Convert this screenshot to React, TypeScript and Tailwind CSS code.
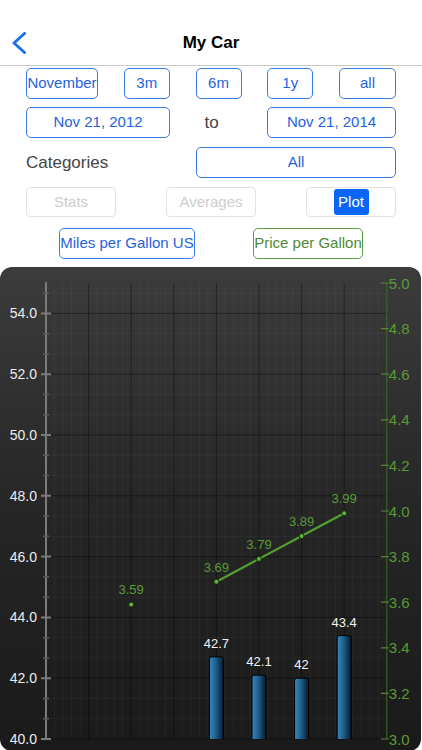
import React from "react";

const blueBtn =
  "h-full flex items-center justify-center rounded-[5px] border border-[#3a7ae6] text-[#1f63dc] text-[15px] whitespace-nowrap";
const greyBtn =
  "h-full w-[90px] flex items-center justify-center rounded-[4px] border border-[#e2e2e2] text-[#cdcdcd] text-[15px]";

const TOP = 16;
const BOTTOM = 472;
const X0 = 46;
const STEP = 42.6;

const yLeft = (v: number) => BOTTOM - (v - 40) * ((BOTTOM - TOP) / 15);
const yRight = (v: number) => BOTTOM - (v - 3) * ((BOTTOM - TOP) / 2);
const xAt = (i: number) => X0 + i * STEP;

const prices = [
  { i: 2, v: 3.59 },
  { i: 4, v: 3.69 },
  { i: 5, v: 3.79 },
  { i: 6, v: 3.89 },
  { i: 7, v: 3.99 },
];
const bars = [
  { i: 4, v: 42.7 },
  { i: 5, v: 42.1 },
  { i: 6, v: 42 },
  { i: 7, v: 43.4 },
];

function Chart() {
  const vMinor = Array.from({ length: 39 }, (_, k) => k + 1);
  const hLines = Array.from({ length: 23 }, (_, k) => k);
  const leftLabels = [54, 52, 50, 48, 46, 44, 42, 40];
  const rightLabels = [5.0, 4.8, 4.6, 4.4, 4.2, 4.0, 3.8, 3.6, 3.4, 3.2, 3.0];
  const line = prices.slice(1).map((p) => `${xAt(p.i)},${yRight(p.v)}`).join(" ");

  return (
    <svg width="422" height="484" viewBox="0 0 422 484" className="block">
      <defs>
        <linearGradient id="bar" x1="0" x2="1" y1="0" y2="0">
          <stop offset="0" stopColor="#3489c2" />
          <stop offset="0.45" stopColor="#1f5f8c" />
          <stop offset="1" stopColor="#07192a" />
        </linearGradient>
      </defs>

      {vMinor.map((k) => (
        <line
          key={"v" + k}
          x1={X0 + k * (STEP / 5)}
          x2={X0 + k * (STEP / 5)}
          y1={TOP}
          y2={BOTTOM}
          stroke={k % 5 === 0 ? "rgba(0,0,0,0.38)" : "rgba(255,255,255,0.04)"}
          strokeWidth="1"
        />
      ))}
      {hLines.map((k) => {
        const y = yLeft(40 + (k * 2) / 3);
        return (
          <line
            key={"h" + k}
            x1={X0}
            x2={xAt(8)}
            y1={y}
            y2={y}
            stroke={k % 3 === 0 ? "rgba(0,0,0,0.38)" : "rgba(255,255,255,0.04)"}
            strokeWidth="1"
          />
        );
      })}

      {/* left axis */}
      <line x1={X0} x2={X0} y1={TOP - 1} y2={BOTTOM + 1} stroke="#7b7b7b" strokeWidth="2" />
      {hLines.map((k) =>
        k % 3 === 0 ? null : (
          <line
            key={"mt" + k}
            x1={X0 - 3}
            x2={X0 + 3}
            y1={yLeft(40 + (k * 2) / 3)}
            y2={yLeft(40 + (k * 2) / 3)}
            stroke="#5a5a5a"
            strokeWidth="1.5"
          />
        )
      )}
      {leftLabels.map((v) => (
        <g key={"l" + v}>
          <line x1={X0 - 5} x2={X0 + 5} y1={yLeft(v)} y2={yLeft(v)} stroke="#7b7b7b" strokeWidth="2" />
          <text
            x={37}
            y={yLeft(v) + 5}
            textAnchor="end"
            fill="#ececec"
            fontSize="14"
            fontFamily="'Liberation Sans', Arial, sans-serif"
          >
            {v.toFixed(1)}
          </text>
        </g>
      ))}

      {/* right axis */}
      <line x1={xAt(8)} x2={xAt(8)} y1={TOP} y2={BOTTOM} stroke="#3f6c2a" strokeWidth="1" />
      {rightLabels.map((v) => (
        <g key={"r" + v}>
          <line x1={xAt(8) - 6} x2={xAt(8) + 2} y1={yRight(v)} y2={yRight(v)} stroke="#4f8a33" strokeWidth="1.2" />
          <text
            x={xAt(8) + 2}
            y={yRight(v) + 5.5}
            fill="#5a9a38"
            fontSize="15"
            fontFamily="'Liberation Sans', Arial, sans-serif"
          >
            {v.toFixed(1)}
          </text>
        </g>
      ))}

      {/* bars */}
      {bars.map((b) => (
        <g key={"b" + b.i}>
          <path
            d={`M${xAt(b.i) - 7},${BOTTOM} V${yLeft(b.v) + 2} Q${xAt(b.i) - 7},${yLeft(b.v)} ${xAt(b.i) - 5},${yLeft(b.v)} H${xAt(b.i) + 5} Q${xAt(b.i) + 7},${yLeft(b.v)} ${xAt(b.i) + 7},${yLeft(b.v) + 2} V${BOTTOM}`}
            fill="url(#bar)"
            stroke="#000"
            strokeWidth="1"
          />
          <text
            x={xAt(b.i)}
            y={yLeft(b.v) - 9}
            textAnchor="middle"
            fill="#f2f2f2"
            fontSize="13"
            fontFamily="'Liberation Sans', Arial, sans-serif"
          >
            {b.v}
          </text>
        </g>
      ))}

      {/* price line */}
      <polyline points={line} fill="none" stroke="#52a030" strokeWidth="2.2" />
      {prices.map((p) => (
        <g key={"p" + p.i}>
          <circle cx={xAt(p.i)} cy={yRight(p.v)} r="2.5" fill="#62b33c" stroke="#13280b" strokeWidth="1" />
          <text
            x={xAt(p.i)}
            y={yRight(p.v) - 10}
            textAnchor="middle"
            fill="#5a9a38"
            fontSize="13"
            fontFamily="'Liberation Sans', Arial, sans-serif"
          >
            {p.v.toFixed(2)}
          </text>
        </g>
      ))}
    </svg>
  );
}

export default function App() {
  return (
    <div className="w-[422px] h-[750px] overflow-hidden bg-white font-['Liberation_Sans',Arial,sans-serif]">
      <header className="relative pt-[20px] h-[66px] border-b border-[#c8c8c8]">
        <div className="h-[45px] flex items-center justify-center">
          <h1 className="text-[17px] font-bold text-black">My Car</h1>
        </div>
        <svg className="absolute left-[11px] top-[32px]" width="16" height="22" viewBox="0 0 16 22">
          <polyline points="13.5,1.5 3,11 13.5,20.5" fill="none" stroke="#1c6ef2" strokeWidth="3" strokeLinecap="round" strokeLinejoin="round" />
        </svg>
      </header>

      <div className="px-[26px]">
        <div className="mt-[2px] h-[31px] flex justify-between">
          <button className={blueBtn + " w-[72px]"}>November</button>
          <button className={blueBtn + " w-[46px]"}>3m</button>
          <button className={blueBtn + " w-[46px]"}>6m</button>
          <button className={blueBtn + " w-[46px]"}>1y</button>
          <button className={blueBtn + " w-[57px]"}>all</button>
        </div>

        <div className="mt-[8px] h-[31px] flex items-center">
          <button className={blueBtn + " w-[144px]"}>Nov 21, 2012</button>
          <span className="w-[97px] pr-[14px] text-center text-[17px] text-[#444]">to</span>
          <button className={blueBtn + " w-[129px]"}>Nov 21, 2014</button>
        </div>

        <div className="mt-[9px] h-[31px] flex items-center justify-between">
          <span className="text-[17px] text-[#444]">Categories</span>
          <button className={blueBtn + " w-[200px]"}>All</button>
        </div>

        <div className="mt-[9px] h-[30px] flex justify-between">
          <div className={greyBtn}>Stats</div>
          <div className={greyBtn}>Averages</div>
          <div className={greyBtn}>
            <span className="h-[26px] w-[35px] flex items-center justify-center rounded-[3px] bg-[#0a66f6] text-white">
              Plot
            </span>
          </div>
        </div>
      </div>

      <div className="mt-[11px] h-[31px] flex justify-center gap-[58px]">
        <button className={blueBtn + " w-[136px]"}>Miles per Gallon US</button>
        <button className="h-full w-[110px] flex items-center justify-center rounded-[5px] border border-[#5c9a44] text-[#4d8a35] text-[15px] whitespace-nowrap">
          Price per Gallon
        </button>
      </div>

      <div className="mt-[8px] w-[421px] h-[484px] rounded-[12px] overflow-hidden bg-gradient-to-b from-[#3c3c3c] via-[#262626] to-[#1a1a1a]">
        <Chart />
      </div>
    </div>
  );
}
